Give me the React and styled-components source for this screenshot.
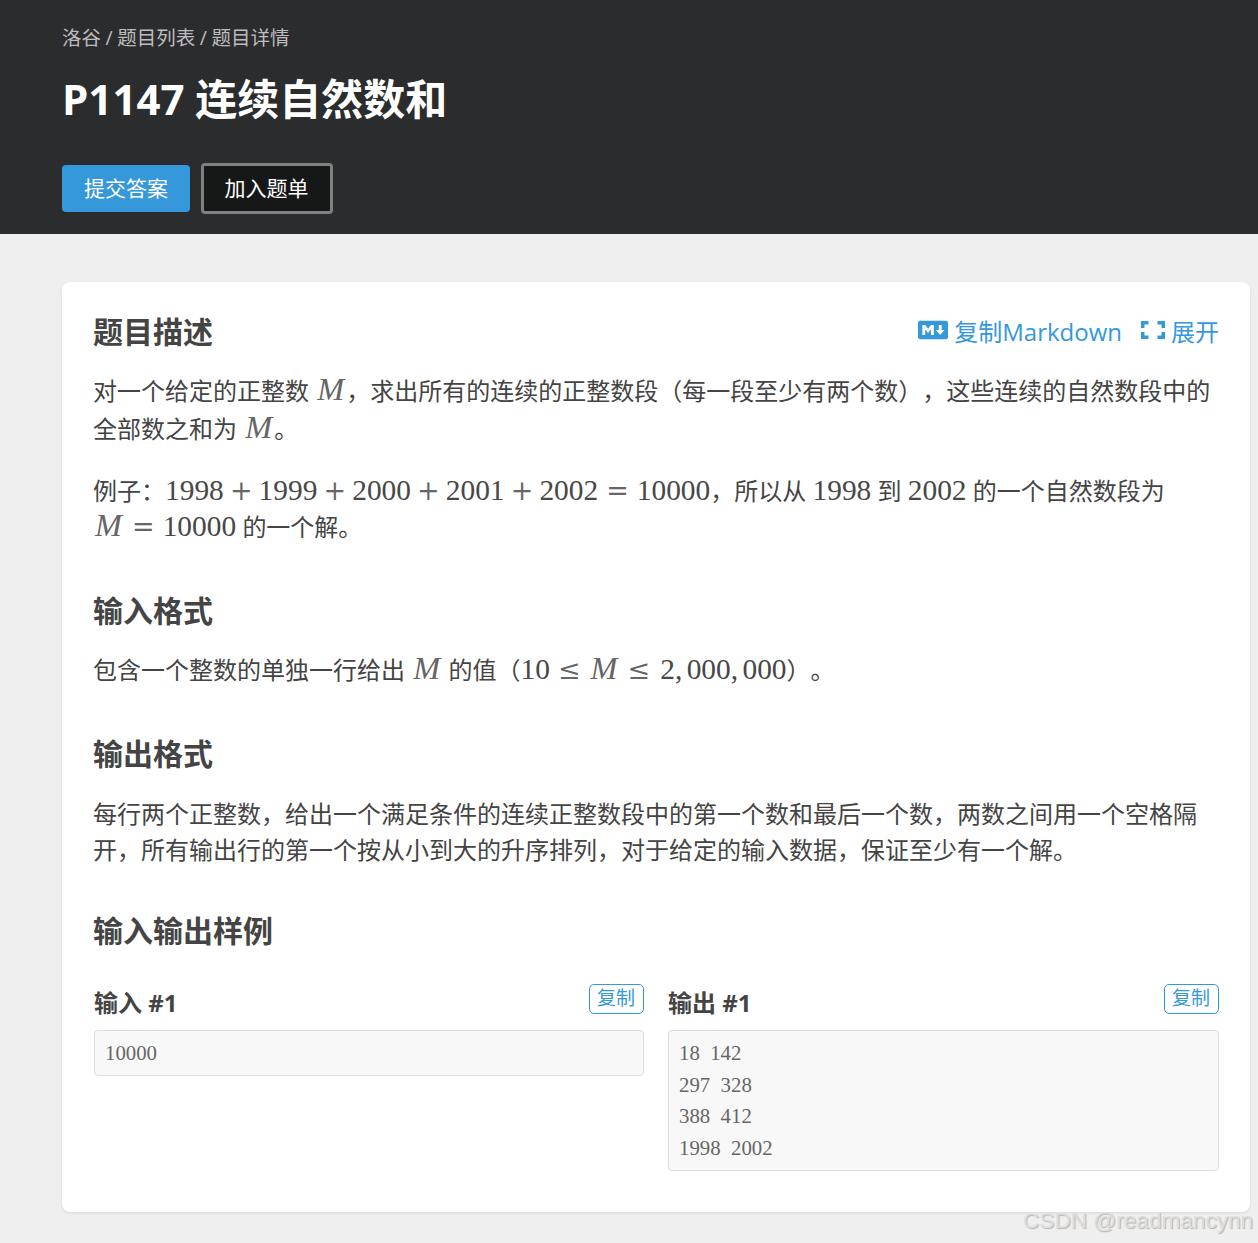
import React from 'react';
import styled, { createGlobalStyle } from 'styled-components';
import { FaMarkdown } from 'react-icons/fa';

const ExpandIcon = () => (
  <StExpand viewBox="0 0 24 18">
    <path d="M1.75 7V1.75H7.5M16.5 1.75H22.25V7M22.25 11V16.25H16.5M7.5 16.25H1.75V11" />
  </StExpand>
);

const App = () => {
  return (
    <>
      <GlobalStyle />
      <StHeader>
        <StCrumbs>洛谷 / 题目列表 / 题目详情</StCrumbs>
        <StTitle>P1147 连续自然数和</StTitle>
        <StActions>
          <StSubmit>提交答案</StSubmit>
          <StAddList>加入题单</StAddList>
        </StActions>
      </StHeader>
      <StMain>
        <StCard>
          <StTopRow>
            <StHeading>题目描述</StHeading>
            <StTools>
              <StTool>
                <FaMarkdown size={30} />
                复制Markdown
              </StTool>
              <StTool>
                <ExpandIcon />
                展开
              </StTool>
            </StTools>
          </StTopRow>
          <StPara $top={18} $line={38}>
            对一个给定的正整数 <Tex><i>M</i></Tex>，求出所有的连续的正整数段（每一段至少有两个数），这些连续的自然数段中的全部数之和为 <Tex><i>M</i></Tex>。
          </StPara>
          <StPara $top={25}>
            例子：<Tex>1998<Bin>+</Bin>1999<Bin>+</Bin>2000<Bin>+</Bin>2001<Bin>+</Bin>2002<Rel>=</Rel>10000</Tex>，所以从 <Tex>1998</Tex> 到 <Tex>2002</Tex> 的一个自然数段为 <Tex><i>M</i><Rel>=</Rel>10000</Tex> 的一个解。
          </StPara>

          <StHeading $top={44}>输入格式</StHeading>
          <StPara $top={19}>
            包含一个整数的单独一行给出 <Tex><i>M</i></Tex> 的值（<Tex>10<Rel>≤</Rel><i>M</i><Rel $right={10}>≤</Rel>2<Comma>,</Comma>000<Comma>,</Comma>000</Tex>）。
          </StPara>

          <StHeading $top={44}>输出格式</StHeading>
          <StPara $top={20}>
            每行两个正整数，给出一个满足条件的连续正整数段中的第一个数和最后一个数，两数之间用一个空格隔开，所有输出行的第一个按从小到大的升序排列，对于给定的输入数据，保证至少有一个解。
          </StPara>

          <StHeading $top={41}>输入输出样例</StHeading>
          <StSamples>
            <StSample>
              <StSampleHead>
                <StSampleTitle>输入 #1</StSampleTitle>
                <StCopy>复制</StCopy>
              </StSampleHead>
              <StCode>10000</StCode>
            </StSample>
            <StSample>
              <StSampleHead>
                <StSampleTitle>输出 #1</StSampleTitle>
                <StCopy>复制</StCopy>
              </StSampleHead>
              <StCode>{'18 142\n297 328\n388 412\n1998 2002'}</StCode>
            </StSample>
          </StSamples>
        </StCard>
      </StMain>
      <StWatermark>CSDN @readmancynn</StWatermark>
    </>
  );
};

const GlobalStyle = createGlobalStyle`
  html, body {
    margin: 0;
    padding: 0;
    background: #efefef;
  }
  body {
    font-family: "Open Sans", "Noto Sans CJK SC", sans-serif;
    color: #444;
    text-spacing-trim: space-all;
  }
  * {
    box-sizing: border-box;
  }
`;

const StHeader = styled.header`
  height: 234px;
  padding: 22px 62px 0;
  background: #2b2c2e;
`;

const StCrumbs = styled.div`
  font-size: 19.5px;
  line-height: 32px;
  word-spacing: -0.5px;
  color: #bdbdbd;
`;

const StTitle = styled.h1`
  margin: 15px 0 0;
  font-size: 42px;
  line-height: 60px;
  font-weight: 700;
  color: #fff;
`;

const StActions = styled.div`
  display: flex;
  align-items: center;
  gap: 11px;
  margin-top: 34px;
`;

const StSubmit = styled.button`
  width: 128px;
  height: 47px;
  padding: 0 0 3px;
  border: 0;
  border-radius: 4px;
  background: #3498db;
  color: #fff;
  font: inherit;
  font-size: 21px;
`;

const StAddList = styled.button`
  width: 132px;
  height: 51px;
  padding: 0 1px 3px 0;
  border: 3px solid #808080;
  border-radius: 4px;
  background: #161717;
  color: #fff;
  font: inherit;
  font-size: 21px;
`;

const StMain = styled.main`
  padding: 48px 8px 31px 62px;
`;

const StCard = styled.section`
  height: 930px;
  padding: 28px 31px 0;
  border-radius: 8px;
  background: #fff;
  box-shadow: 0 1px 3px rgba(0, 0, 0, 0.1);
`;

const StTopRow = styled.div`
  display: flex;
  align-items: center;
  justify-content: space-between;
`;

const StHeading = styled.h2`
  margin: ${({ $top }) => $top || 0}px 0 0;
  font-size: 30px;
  line-height: 44px;
  font-weight: 700;
  color: #444;
`;

const StTools = styled.div`
  display: flex;
  align-items: center;
  gap: 19px;
  margin-top: -4px;
`;

const StTool = styled.span`
  display: flex;
  align-items: center;
  gap: 6px;
  font-size: 24px;
  color: #3498db;
`;

const StExpand = styled.svg`
  width: 24px;
  height: 18px;
  fill: none;
  stroke: currentColor;
  stroke-width: 3.5;
`;

const StPara = styled.p`
  margin: ${({ $top }) => $top || 0}px 0 0;
  font-size: 24px;
  line-height: ${({ $line }) => $line || 36}px;
  color: #444;
`;

const Tex = styled.span`
  font-family: "Liberation Serif", serif;
  font-size: 29.4px;
  line-height: 1;
  white-space: nowrap;
  color: #484848;

  i {
    display: inline-block;
    width: 0.96em;
    padding-left: 2px;
    font-size: 1.1em;
    line-height: 1;
    font-weight: 400;
    color: #666;
  }
`;

const Bin = styled.span`
  display: inline-block;
  margin: 0 6.1px;
  font-family: "DejaVu Serif", serif;
  font-size: 27px;
  line-height: 1;
  color: #666;
`;

const Rel = styled.span`
  display: inline-block;
  margin: 0 ${({ $right }) => $right || 8}px 0 8px;
  font-family: "DejaVu Serif", serif;
  font-size: 27px;
  line-height: 1;
  color: #666;
`;

const Comma = styled.span`
  display: inline-block;
  width: 0.4em;
`;

const StSamples = styled.div`
  display: grid;
  grid-template-columns: 550px 551px;
  gap: 24px;
  margin-top: 26px;
  padding-left: 1px;
`;

const StSample = styled.div`
  min-width: 0;
`;

const StSampleHead = styled.div`
  display: flex;
  align-items: flex-start;
  justify-content: space-between;
  height: 51px;
`;

const StSampleTitle = styled.h3`
  margin: 0;
  padding-top: 6px;
  font-size: 24px;
  line-height: 36px;
  font-weight: 700;
  color: #444;
`;

const StCopy = styled.button`
  width: 55px;
  height: 30px;
  margin-top: 5px;
  padding: 0 1px 2px 0;
  border: 1px solid #3498db;
  border-radius: 5px;
  background: #fff;
  color: #3498db;
  font: inherit;
  font-size: 19px;
  line-height: 26px;
`;

const StCode = styled.pre`
  margin: 0;
  padding: 6px 10px 6px 10px;
  border: 1px solid #ddd;
  border-radius: 4px;
  background: #f8f8f8;
  color: #666;
  font-family: "Liberation Serif", serif;
  font-size: 20.8px;
  word-spacing: 5.2px;
  line-height: 31.67px;
`;

const StWatermark = styled.div`
  position: absolute;
  top: 1206px;
  left: 1023px;
  font-family: "Liberation Sans", sans-serif;
  font-size: 22.6px;
  line-height: 30px;
  white-space: nowrap;
  color: #dedede;
  text-shadow: 1px 1px 1px #b4b4b4;
`;

export default App;
